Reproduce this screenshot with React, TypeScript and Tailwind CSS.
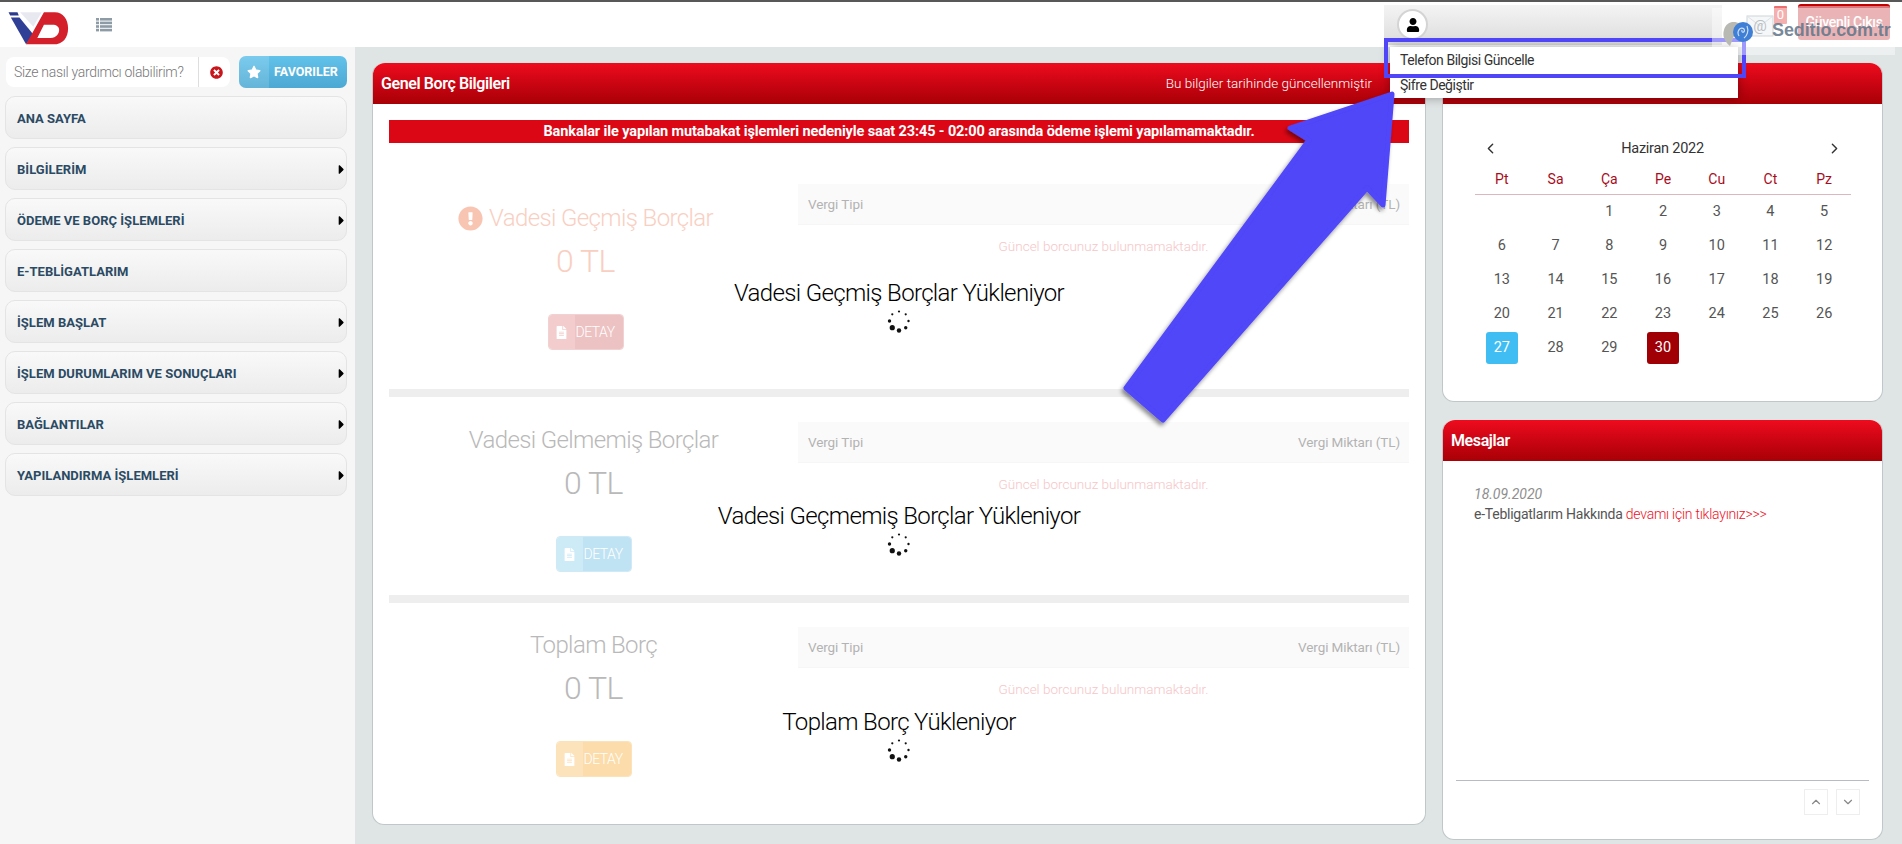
import React from "react";
import { FaCaretRight, FaExclamationCircle, FaFileAlt, FaStar, FaTimesCircle, FaUser } from "react-icons/fa";
import { ChevronDown, ChevronLeft, ChevronRight, ChevronUp } from "lucide-react";

const menu = [
  ["ANA SAYFA", false],
  ["BİLGİLERİM", true],
  ["ÖDEME VE BORÇ İŞLEMLERİ", true],
  ["E-TEBLİGATLARIM", false],
  ["İŞLEM BAŞLAT", true],
  ["İŞLEM DURUMLARIM VE SONUÇLARI", true],
  ["BAĞLANTILAR", true],
  ["YAPILANDIRMA İŞLEMLERİ", true],
] as const;

function Logo() {
  return (
    <svg width="70" height="43" viewBox="0 0 210 130" className="shrink-0">
      <path d="M25 28H52L56 38H30Z" fill="#2c3a8c" />
      <path d="M32 44H58L100 95L78 125Z" fill="#2f3f95" />
      <path d="M60 28H125L100 72Z" fill="#e8e9f0" />
      <path
        fillRule="evenodd"
        d="M78 125L132 28H165C190 28 205 50 205 76C205 105 190 125 160 125ZM132 66L112 106H152C170 106 178 92 178 82C178 72 170 66 158 66Z"
        fill="#d4202a"
      />
    </svg>
  );
}

function ListIcon() {
  return (
    <svg width="16" height="14" viewBox="0 0 16 14" fill="#8d9ba6" className="ml-[26px]">
      {[0, 3.6, 7.2, 10.8].map((y) => (
        <g key={y}>
          <rect x="0" y={y} width="3" height="2.6" />
          <rect x="4" y={y} width="12" height="2.6" />
        </g>
      ))}
    </svg>
  );
}

function Spinner() {
  const sizes = [1.1, 1.1, 1.2, 1.7, 2.2, 2.6, 1.7, 1.1];
  return (
    <svg width="24" height="24" viewBox="0 0 24 24" fill="#111" className="-mt-[2px]">
      {sizes.map((r, i) => {
        const a = (i * Math.PI) / 4;
        return <circle key={i} cx={12 + 9.5 * Math.sin(a)} cy={12 - 9.5 * Math.cos(a)} r={r} />;
      })}
    </svg>
  );
}

function CardHeader({ title, children }: { title: string; children?: React.ReactNode }) {
  return (
    <div className="flex h-[41px] items-center justify-between rounded-t-[12px] bg-gradient-to-b from-[#ee0c1e] to-[#a80006] px-2 text-white">
      <span className="text-[16px] font-semibold tracking-[-0.4px]">{title}</span>
      {children}
    </div>
  );
}

type SectionProps = {
  title: string;
  titleClass: string;
  icon?: boolean;
  btnLeft: string;
  btnRight: string;
  btnBorder: string;
  loading: string;
  boxClass: string;
  leftClass: string;
  loaderClass: string;
};

function Section(p: SectionProps) {
  return (
    <div className={`relative flex ${p.boxClass}`}>
      <div className={`flex w-[409px] shrink-0 flex-col items-center ${p.leftClass}`}>
        <div className={`flex h-[36px] items-center gap-[6px] text-[24px] font-light tracking-[-0.62px] ${p.titleClass}`}>
          {p.icon && <FaExclamationCircle className="text-[25px] text-[#f9c5b3]" />}
          <span>{p.title}</span>
        </div>
        <div className={`mt-[4px] h-[42px] text-[32px] leading-[42px] font-light tracking-[-0.5px] ${p.titleClass}`}>0 TL</div>
        <div className={`mt-[32px] flex h-[36px] w-[76px] overflow-hidden rounded-[4px] border text-white ${p.btnBorder}`}>
          <span className={`flex w-[26px] items-center justify-center ${p.btnLeft}`}>
            <FaFileAlt className="text-[13px]" />
          </span>
          <span className={`flex flex-1 items-center pl-[1px] text-[14px] font-light tracking-[-0.5px] ${p.btnRight}`}>DETAY</span>
        </div>
      </div>
      <div className="flex-1">
        <div className="flex h-[41px] items-center justify-between border-b border-[#f6f6f6] bg-[#fafafa] pr-[9px] pl-[10px] text-[13.5px] tracking-[-0.1px] text-[#b3b3b3]">
          <span>Vergi Tipi</span>
          <span>Vergi Miktarı (TL)</span>
        </div>
        <div className="pt-[11px] text-center text-[13.5px] font-light tracking-[0px] text-[#f6c6c8]">Güncel borcunuz bulunmamaktadır.</div>
      </div>
      <div className={`absolute inset-x-0 flex flex-col items-center text-black ${p.loaderClass}`}>
        <div className="text-[24px] leading-[36px] font-light tracking-[-0.65px]">{p.loading}</div>
        <Spinner />
      </div>
    </div>
  );
}

function Calendar() {
  const names = ["Pt", "Sa", "Ça", "Pe", "Cu", "Ct", "Pz"];
  const cells: (number | null)[] = [null, null];
  for (let d = 1; d <= 30; d++) cells.push(d);
  return (
    <div className="px-[32px] pt-[32px]">
      <div className="flex h-[25px] items-center justify-between px-[7px] text-[#333]">
        <ChevronLeft size={17} strokeWidth={2} />
        <span className="text-[14.5px] tracking-[-0.25px] text-[#333]">Haziran 2022</span>
        <ChevronRight size={17} strokeWidth={2} />
      </div>
      <div className="grid h-[34px] w-[376px] grid-cols-7 items-center border-b border-[#dcb7bd] pt-[4px] text-center text-[14px] text-[#a80c1c]">
        {names.map((n) => (
          <span key={n}>{n}</span>
        ))}
      </div>
      <div className="grid w-[376px] grid-cols-7 text-[14.5px] text-[#555]">
        {cells.map((c, i) => (
          <div key={i} className="flex h-[34px] items-center justify-center">
            {c === 27 ? (
              <span className="flex h-[32px] w-[32px] items-center justify-center rounded-[3px] bg-[#40bdf3] text-white">27</span>
            ) : c === 30 ? (
              <span className="flex h-[32px] w-[32px] items-center justify-center rounded-[3px] bg-[#a00005] text-white">30</span>
            ) : (
              c
            )}
          </div>
        ))}
      </div>
    </div>
  );
}

function MailIcon() {
  return (
    <svg width="28" height="24" viewBox="0 0 28 24" className="mt-[11px] ml-[24px] self-start">
      <rect x="1" y="3" width="26" height="20" fill="#eef1f3" stroke="#aab3ba" />
      <path d="M1 3L14 13L27 3" fill="none" stroke="#c3cad0" />
      <text x="14" y="18" textAnchor="middle" fontSize="15" fill="#7e8a93" fontFamily="Roboto, sans-serif">@</text>
    </svg>
  );
}

export default function App() {
  return (
    <div className="relative flex h-[844px] w-[1902px] flex-col overflow-hidden bg-[#dfe4e5] [font-family:Roboto,sans-serif]">
      <header className="flex h-[47px] shrink-0 items-center border-t-2 border-[#585858] bg-white pl-[0px]">
        <Logo />
        <ListIcon />
        <div className="ml-auto flex h-full items-center">
          <div className="flex h-[40px] w-[338px] items-center bg-gradient-to-b from-[#f4f4f4] to-[#dcdcdc] pl-[13px]">
            <span className="flex h-[31px] w-[31px] items-center justify-center rounded-full border-2 border-[#d4d4d4] bg-white">
              <FaUser className="text-[14px] text-black" />
            </span>
          </div>
          <MailIcon />
          <span className="mt-[4px] flex h-[18px] w-[13px] items-center justify-center self-start rounded-[1px] bg-[#ec6e6e] text-[13px] text-white">0</span>
          <button className="mr-[12px] mb-[6px] ml-[11px] flex h-[36px] w-[92px] items-center justify-center rounded-[3px] border-t-2 border-[#c40000] bg-[#d9777c] text-[14px] font-medium tracking-[-0.3px] text-white">
            Güvenli Çıkış
          </button>
        </div>
      </header>

      <div className="flex flex-1">
        <aside className="flex w-[355px] shrink-0 flex-col bg-[#f6f6f6] pr-[8px] pl-[5px]">
          <div className="mt-[9px] flex h-[32px] items-center">
            <div className="ml-[1px] flex h-[30px] w-[224px] items-center rounded-[8px] bg-white">
              <span className="w-[193px] border-r border-[#dedede] pl-[8px] text-[14px] leading-[30px] font-light tracking-[-0.3px] whitespace-nowrap text-[#777]">Size nasıl yardımcı olabilirim?</span>
              <FaTimesCircle className="ml-[11px] text-[13px] text-[#c8161d]" />
            </div>
            <div className="ml-[9px] flex h-[32px] w-[108px] overflow-hidden rounded-[7px] bg-gradient-to-b from-[#63c2ea] to-[#4aa8d3] text-white">
              <span className="flex w-[30px] items-center justify-center bg-white/15">
                <FaStar className="text-[14px]" />
              </span>
              <span className="pl-[5px] text-[12.5px] leading-[32px] font-bold">FAVORILER</span>
            </div>
          </div>
          <nav className="mt-[8px] flex flex-col gap-[8px]">
            {menu.map(([label, arrow]) => (
              <div key={label} className="flex h-[43px] items-center justify-between rounded-[10px] border border-[#e4e4e4] bg-gradient-to-b from-[#f9f9f9] to-[#ececec] pt-[2px] pr-[1px] pl-[11px] text-[13px] font-bold tracking-[0.02px] text-[#2b4a63]">
                <span>{label}</span>
                {arrow && <FaCaretRight className="-mr-[4px] text-[15px] text-black" />}
              </div>
            ))}
          </nav>
        </aside>

        <main className="mt-[16px] ml-[17px] flex h-[762px] w-[1054px] shrink-0 flex-col rounded-[12px] border border-t-0 border-[#bfc7c9] bg-white">
          <CardHeader title="Genel Borç Bilgileri">
            <span className="mr-[45px] text-[13.5px] font-light tracking-[0px]">Bu bilgiler tarihinde güncellenmiştir</span>
          </CardHeader>
          <div className="mx-[16px] flex flex-1 flex-col pt-[16px]">
            <div className="flex h-[23px] items-center justify-center bg-[#dc0715] text-[14.5px] font-bold tracking-[-0.12px] text-white">
              Bankalar ile yapılan mutabakat işlemleri nedeniyle saat 23:45 - 02:00 arasında ödeme işlemi yapılamamaktadır.
            </div>
            <Section
              title="Vadesi Geçmiş Borçlar"
              titleClass="text-[#f9cfc2]"
              icon
              btnLeft="bg-[#f3cdcd]"
              btnRight="bg-[#edc2c2]"
              btnBorder="border-[#f1d2d2]"
              loading="Vadesi Geçmiş Borçlar Yükleniyor"
              boxClass="h-[246px] pt-[41px]"
              leftClass="pt-[16px] pr-[16px]"
              loaderClass="top-[132px]"
            />
            <div className="h-[8px] bg-[#eeeeee]" />
            <Section
              title="Vadesi Gelmemiş Borçlar"
              titleClass="text-[#b9b9b9]"
              btnLeft="bg-[#cdeaf7]"
              btnRight="bg-[#bfe3f3]"
              btnBorder="border-[#cfeaf6]"
              loading="Vadesi Geçmemiş Borçlar Yükleniyor"
              boxClass="h-[198px] pt-[25px]"
              leftClass=""
              loaderClass="top-[101px]"
            />
            <div className="h-[8px] bg-[#eeeeee]" />
            <Section
              title="Toplam Borç"
              titleClass="text-[#b9b9b9]"
              btnLeft="bg-[#fde3bb]"
              btnRight="bg-[#fbdcaa]"
              btnBorder="border-[#fce2b8]"
              loading="Toplam Borç Yükleniyor"
              boxClass="h-[198px] pt-[24px]"
              leftClass=""
              loaderClass="top-[101px]"
            />
          </div>
        </main>

        <div className="mt-[16px] ml-[16px] flex w-[441px] shrink-0 flex-col gap-[18px]">
          <section className="h-[339px] rounded-[12px] border border-t-0 border-[#bfc7c9] bg-white">
            <CardHeader title="" />
            <Calendar />
          </section>
          <section className="flex h-[420px] flex-col rounded-[12px] border border-t-0 border-[#bfc7c9] bg-white">
            <CardHeader title="Mesajlar" />
            <div className="flex-1 px-[31px] pt-[23px] text-[14px]">
              <div className="h-[20px] leading-[20px] text-[#8e8e8e] italic">18.09.2020</div>
              <div className="-mt-[1px] h-[22px] leading-[22px] tracking-[-0.25px] text-[#555]">
                e-Tebligatlarım Hakkında <span className="font-light text-[#f0101e]">devamı için tıklayınız&gt;&gt;&gt;</span>
              </div>
            </div>
            <div className="mx-[13px] flex h-[59px] justify-end gap-[8px] border-t border-[#b8bcc0] pt-[8px] pr-[9px]">
              <span className="flex h-[26px] w-[24px] items-center justify-center border border-[#eeeeee] text-[#888]"><ChevronUp size={14} /></span>
              <span className="flex h-[26px] w-[24px] items-center justify-center border border-[#eeeeee] text-[#888]"><ChevronDown size={14} /></span>
            </div>
          </section>
        </div>
      </div>

      {/* user dropdown */}
      <div className="absolute top-[47px] left-[1390px] w-[348px] bg-white text-[14px] tracking-[-0.45px] text-[#333] shadow-[0_0_10px_rgba(0,0,0,0.35)]">
        <div className="flex h-[26px] items-center pl-[10px]">Telefon Bilgisi Güncelle</div>
        <div className="flex h-[25px] items-center pl-[10px]">Şifre Değiştir</div>
      </div>

      {/* annotation rectangle */}
      <div className="absolute top-[38px] left-[1384px] h-[40px] w-[362px] border-[4px] border-[#5046f8]" />

      {/* annotation arrow */}
      <svg className="pointer-events-none absolute top-0 left-0" width="1902" height="844" viewBox="0 0 1902 844">
        <defs>
          <filter id="arrowShadow" x="-10%" y="-10%" width="120%" height="120%">
            <feDropShadow dx="-2" dy="3" stdDeviation="2" floodColor="#000" floodOpacity="0.45" />
          </filter>
        </defs>
        <polygon
          points="1126,388 1309,140 1290,128 1392,94 1383,205 1367,188 1163,420"
          fill="#5046f8"
          stroke="#5046f8"
          strokeWidth="5"
          strokeLinejoin="round"
          filter="url(#arrowShadow)"
        />
      </svg>

      {/* watermark */}
      <div className="absolute top-[8px] left-[1712px] h-[47px] w-[183px] bg-white/45" />
      <svg className="pointer-events-none absolute top-[14px] left-[1722px]" width="34" height="36" viewBox="0 0 34 36">
        <path d="M2 16C4 8 12 6 18 10L12 22L8 32C3 28 0 22 2 16Z" fill="#b9b9b4" />
        <circle cx="21" cy="18" r="10" fill="#3f7fd6" />
        <path d="M17 22C14 17 19 12 22 15C24 18 19 20 20 16M25 12C27 17 25 22 22 24" fill="none" stroke="#cfe0f5" strokeWidth="1.2" />
      </svg>
      <div className="absolute top-[20px] left-[1772px] text-[18px] leading-[20px] font-bold tracking-[-0.1px] text-[#5f7488]/85 [font-family:'Liberation_Sans',sans-serif]">Seditio.com.tr</div>
    </div>
  );
}
